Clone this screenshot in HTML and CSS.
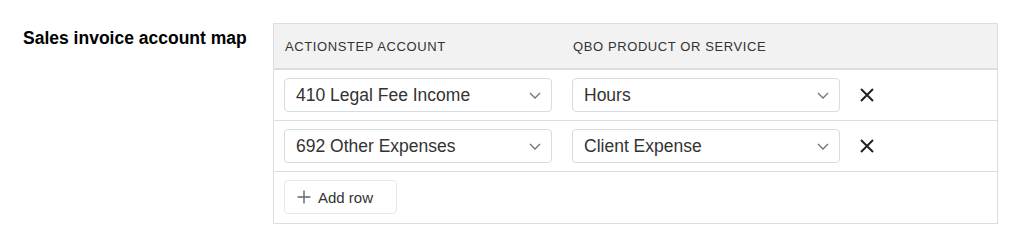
FILE: index.html
```html
<!DOCTYPE html>
<html>

<head>
	<title>Account map</title>

	<link rel="stylesheet" href="styles.css">

</head>

<body>

	<div class="setting">
		<div class="setting-label">Sales invoice account map</div>

		<div class="map-table">
			<div class="map-head">
				<div class="cell">Actionstep account</div>
				<div class="cell">QBO product or service</div>
				<div class="cell"></div>
			</div>

			<div class="map-row">
				<div class="cell">
					<div class="picker">410 Legal Fee Income
						<svg class="chevron" width="12" height="7" viewBox="0 0 12 7"><path d="M1 1l5 5 5-5" fill="none" stroke="#6c757d" stroke-width="1.3"/></svg>
					</div>
				</div>
				<div class="cell">
					<div class="picker">Hours
						<svg class="chevron" width="12" height="7" viewBox="0 0 12 7"><path d="M1 1l5 5 5-5" fill="none" stroke="#6c757d" stroke-width="1.3"/></svg>
					</div>
				</div>
				<div class="cell">
					<svg class="remove" width="14" height="14" viewBox="0 0 14 14"><path d="M1 1l12 12M13 1L1 13" stroke="#222" stroke-width="2"/></svg>
				</div>
			</div>

			<div class="map-row">
				<div class="cell">
					<div class="picker">692 Other Expenses
						<svg class="chevron" width="12" height="7" viewBox="0 0 12 7"><path d="M1 1l5 5 5-5" fill="none" stroke="#6c757d" stroke-width="1.3"/></svg>
					</div>
				</div>
				<div class="cell">
					<div class="picker">Client Expense
						<svg class="chevron" width="12" height="7" viewBox="0 0 12 7"><path d="M1 1l5 5 5-5" fill="none" stroke="#6c757d" stroke-width="1.3"/></svg>
					</div>
				</div>
				<div class="cell">
					<svg class="remove" width="14" height="14" viewBox="0 0 14 14"><path d="M1 1l12 12M13 1L1 13" stroke="#222" stroke-width="2"/></svg>
				</div>
			</div>

			<div class="map-foot">
				<button class="add-row">
					<svg width="14" height="14" viewBox="0 0 14 14"><path d="M7 0.5v13M0.5 7h13" stroke="#666" stroke-width="1.4"/></svg>
					Add row
				</button>
			</div>
		</div>
	</div>

</body>

</html>
```

FILE: styles.css
```css
body {
	margin: 0;
	font-family: "Liberation Sans", Arial, sans-serif;
	color: #333;
	background: #fff;
}

.setting {
	display: flex;
	padding: 23px 0 0 23px;
}

.setting-label {
	width: 250px;
	padding-top: 5px;
	font-size: 17.5px;
	font-weight: bold;
	color: #000;
}

.map-table {
	width: 723px;
	border: 1px solid #ddd;
}

.map-head,
.map-row {
	display: grid;
	grid-template-columns: 288px 288px 1fr;
}

.map-head {
	height: 44px;
	align-items: center;
	background: #f2f2f2;
	border-bottom: 2px solid #ddd;
}

.map-head .cell {
	padding: 0 10px 0 11px;
	font-size: 13px;
	letter-spacing: 0.6px;
	text-transform: uppercase;
	color: #333;
}

.map-row {
	border-bottom: 1px solid #ddd;
	align-items: center;
}

.map-row .cell {
	padding: 8px 10px;
}

.picker {
	display: flex;
	align-items: center;
	justify-content: space-between;
	height: 34px;
	box-sizing: border-box;
	padding: 0 10px 0 11px;
	border: 1px solid #d3dde3;
	border-radius: 4px;
	font-size: 17.5px;
	color: #333;
}

.remove {
	display: block;
}

.map-foot {
	padding: 8px 10px 9px;
}

.add-row {
	display: flex;
	align-items: center;
	gap: 7px;
	height: 34px;
	width: 113px;
	padding: 0 0 0 12px;
	background: #fff;
	border: 1px solid #e8e8e8;
	border-radius: 4px;
	font-family: "Liberation Sans", Arial, sans-serif;
	font-size: 15px;
	color: #333;
}
```
